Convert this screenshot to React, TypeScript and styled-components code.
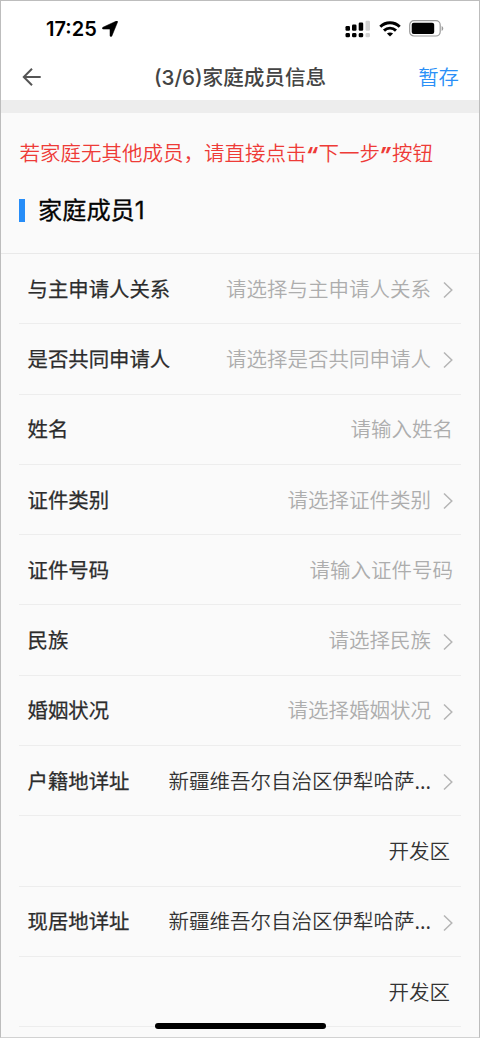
import React from "react";
import styled, { createGlobalStyle, css } from "styled-components";

const GlobalStyle = createGlobalStyle`
  * { box-sizing: border-box; }
  html, body { margin: 0; padding: 0; background: #fafafa; }
  body { font-family: Inter, "Noto Sans CJK SC", sans-serif; overflow: hidden; }
`;

const Screen = styled.main`
  position: relative;
  width: 480px;
  height: 1038px;
  overflow: hidden;
  display: flex;
  flex-direction: column;
  background: #fafafa;
  border: 1px solid #bdbdbd;
  border-bottom-color: #d2d2d2;
`;

const StatusBar = styled.div`
  flex: none;
  height: 54px;
  background: #fff;
  display: flex;
  align-items: center;
  justify-content: space-between;
  padding: 1px 35px 0 45px;
`;

const Clock = styled.div`
  display: flex;
  align-items: center;
  gap: 5px;
  color: #000;
  font: 600 20px/24px Inter, sans-serif;
  svg { margin-top: 1px; }
`;

const StatusIcons = styled.div`
  display: flex;
  align-items: center;
  gap: 8px;
  svg { display: block; }
`;

const NavBar = styled.header`
  flex: none;
  height: 45px;
  background: #fff;
  display: grid;
  grid-template-columns: 100px 1fr 100px;
  align-items: center;
  padding: 0 20px;
`;

const BackButton = styled.button`
  border: 0;
  padding: 0 0 2px;
  background: none;
  display: flex;
`;

const NavTitle = styled.h1`
  margin: 0;
  color: #444;
  text-align: center;
  white-space: nowrap;
  font: 500 20.6px/30px Inter, "Noto Sans CJK SC", sans-serif;
`;

const SaveButton = styled.button`
  border: 0;
  padding: 0 0 4px;
  background: none;
  text-align: right;
  color: #2a8ff7;
  font: 350 20.4px/30px "Noto Sans CJK SC", sans-serif;
`;

const Divider = styled.div`
  flex: none;
  height: 13px;
  background: #ededed;
`;

const Notice = styled.p`
  flex: none;
  height: 30px;
  margin: 24px 0 0;
  padding-left: 18.5px;
  color: #ee3b37;
  white-space: nowrap;
  font: 350 20.5px/30px "Noto Sans CJK SC", sans-serif;
`;

const Quote = styled.span`
  font: italic 800 20px/28px Inter, sans-serif;
  display: inline-block;
  width: 12px;
  text-indent: -1px;
  vertical-align: -1px;
`;

const SectionHead = styled.div`
  flex: none;
  height: 87px;
  display: flex;
  align-items: center;
  gap: 13px;
  padding: 1px 0 0 18px;
  border-bottom: 1px solid #e9e9e9;
`;

const SectionMark = styled.span`
  width: 6px;
  height: 23px;
  background: #268df8;
`;

const SectionTitle = styled.h2`
  margin: 0;
  color: #050505;
  font: 400 24.2px/34px Inter, "Noto Sans CJK SC", sans-serif;
  -webkit-text-stroke: 0.3px currentColor;
`;

const Form = styled.div`
  flex: none;
  padding: 0 18px;
`;

const Row = styled.div<{ $inset: number }>`
  height: 70.3px;
  display: flex;
  align-items: center;
  justify-content: space-between;
  padding: 0 ${(p) => p.$inset}px 2px 8.5px;
  border-bottom: 1px solid #ededed;
`;

const textBase = css`
  font-family: "Noto Sans CJK SC", sans-serif;
  font-size: 20.4px;
  line-height: 30px;
  white-space: nowrap;
`;

const Label = styled.span`
  ${textBase}
  font-weight: 400;
  -webkit-text-stroke: 0.25px currentColor;
  color: #2c2c2c;
`;

const ValueGroup = styled.span`
  display: flex;
  align-items: center;
`;

const Value = styled.span<{ $filled?: boolean }>`
  ${textBase}
  font-size: 20.5px;
  font-weight: 350;
  color: ${(p) => (p.$filled ? "#333" : "#adadad")};
`;

const Chevron = styled.svg`
  display: block;
  margin: 5px 0 0 11px;
`;

const HomeIndicator = styled.div`
  position: absolute;
  left: 154px;
  bottom: 8px;
  width: 171px;
  height: 6px;
  border-radius: 3px;
  background: #000;
`;

type Field = { label?: string; value: string; select?: boolean; filled?: boolean };

const fields: Field[] = [
  { label: "与主申请人关系", value: "请选择与主申请人关系", select: true },
  { label: "是否共同申请人", value: "请选择是否共同申请人", select: true },
  { label: "姓名", value: "请输入姓名" },
  { label: "证件类别", value: "请选择证件类别", select: true },
  { label: "证件号码", value: "请输入证件号码" },
  { label: "民族", value: "请选择民族", select: true },
  { label: "婚姻状况", value: "请选择婚姻状况", select: true },
  { label: "户籍地详址", value: "新疆维吾尔自治区伊犁哈萨...", select: true, filled: true },
  { value: "开发区", filled: true },
  { label: "现居地详址", value: "新疆维吾尔自治区伊犁哈萨...", select: true, filled: true },
  { value: "开发区", filled: true },
];

const insetFor = (f: Field) => (f.select ? 7 : f.filled ? 11 : 8);

const LocationIcon = () => (
  <svg width="16" height="16" viewBox="0 0 16 16">
    <path d="M15.600 1 9.900 14.900c-.4 1-1.900.8-1.900-.4V8.800c0-.5-.2-.7-.7-.7H1.400C.1 8.100 0 6.700 1 6.200L14.400.1c.8-.3 1.500.1 1.200.9Z" fill="#000" stroke="#000" strokeWidth=".5" />
  </svg>
);

const SignalIcon = () => (
  <svg width="26" height="18" viewBox="0 0 26 18">
    <g fill="#000">
      <rect x="0.500" y="6" width="4.500" height="4.800" rx="1.200" />
      <rect x="7" y="4.500" width="4.500" height="6.300" rx="1.200" />
      <rect x="13.700" y="2.500" width="4.500" height="8.300" rx="1.200" />
      <rect x="0.500" y="13" width="4.500" height="4.300" rx="1.400" />
      <rect x="7" y="13" width="4.500" height="4.300" rx="1.400" />
      <rect x="13.700" y="13" width="4.500" height="4.300" rx="1.400" />
    </g>
    <g fill="#d3d3d3">
      <rect x="20.500" y="0.700" width="4.500" height="10.100" rx="1.200" />
      <rect x="20.500" y="13" width="4.500" height="4.300" rx="1.400" />
    </g>
  </svg>
);

const WifiIcon = () => (
  <svg width="22" height="16" viewBox="0 0 22 16">
    <g fill="none" stroke="#000" strokeWidth="2.900">
      <path d="M1.300 5.800C6.700.4 15.300.4 20.700 5.800" />
      <path d="M5 9.600c3.400-3.300 8.600-3.300 12 0" />
    </g>
    <path d="M7.900 12.500c1.800-1.500 4.400-1.500 6.200 0L11 15.600Z" fill="#000" />
  </svg>
);

const BatteryIcon = () => (
  <svg width="35" height="17" viewBox="0 0 35 17">
    <rect x=".7" y=".7" width="30.500" height="15.300" rx="4.300" fill="none" stroke="#9b9b9b" strokeWidth="1.200" />
    <rect x="2.700" y="2.800" width="22.500" height="11.200" rx="2" fill="#000" />
    <path d="M32.600 6v5c2.200-.9 2.200-4.100 0-5Z" fill="#9b9b9b" />
  </svg>
);

export default function App() {
  return (
    <>
      <GlobalStyle />
      <Screen>
        <StatusBar>
          <Clock>
            <span>17:25</span>
            <LocationIcon />
          </Clock>
          <StatusIcons>
            <SignalIcon />
            <WifiIcon />
            <BatteryIcon />
          </StatusIcons>
        </StatusBar>
        <NavBar>
          <BackButton aria-label="返回">
            <svg width="22" height="20" viewBox="0 0 22 20" fill="none" stroke="#555" strokeWidth="2">
              <path d="M11 1.800 2.800 10l8.200 8.200M3 10h16.700" />
            </svg>
          </BackButton>
          <NavTitle>(3/6)家庭成员信息</NavTitle>
          <SaveButton>暂存</SaveButton>
        </NavBar>
        <Divider />
        <Notice>
          若家庭无其他成员，请直接点击<Quote>“</Quote>下一步<Quote>”</Quote>按钮
        </Notice>
        <SectionHead>
          <SectionMark />
          <SectionTitle>家庭成员1</SectionTitle>
        </SectionHead>
        <Form>
          {fields.map((f, i) => (
            <Row key={i} $inset={insetFor(f)}>
              <Label>{f.label}</Label>
              <ValueGroup>
                <Value $filled={f.filled}>{f.value}</Value>
                {f.select && (
                  <Chevron width="12" height="18" viewBox="0 0 12 18" fill="none" stroke="#b5b5b5" strokeWidth="1.500">
                    <path d="M2 1.500 9.800 9 2 16.500" />
                  </Chevron>
                )}
              </ValueGroup>
            </Row>
          ))}
        </Form>
        <HomeIndicator />
      </Screen>
    </>
  );
}
